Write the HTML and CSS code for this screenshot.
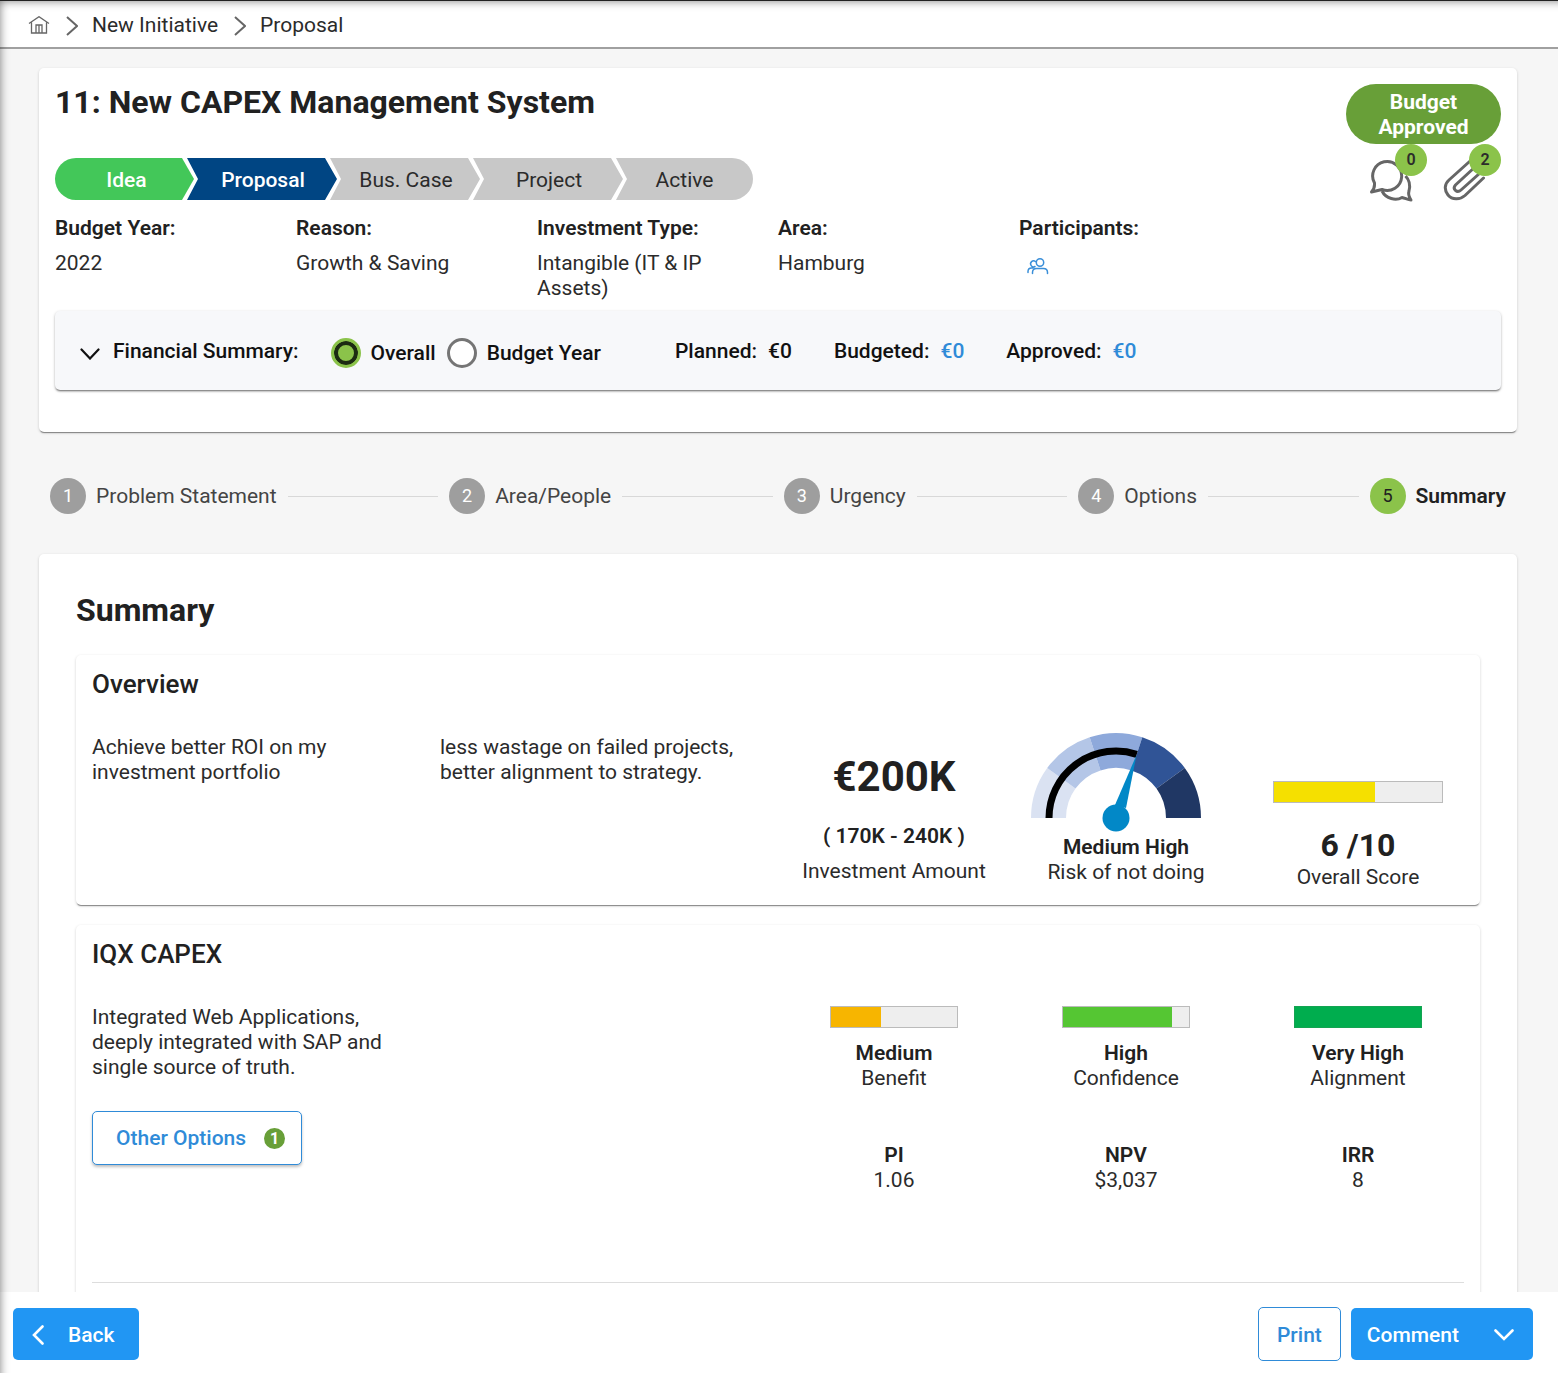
FILE: index.html
```html
<!DOCTYPE html>
<html lang="en">
<head>
<meta charset="utf-8">
<meta name="viewport" content="width=device-width, initial-scale=1">
<title>New CAPEX Management System</title>
<link rel="stylesheet" href="styles.css">
</head>
<body>
<div class="page">
  <nav class="topbar" aria-label="Breadcrumb">
    <a class="crumb" href="#" aria-label="Home">
      <svg width="22" height="20" viewBox="0 0 22 20" fill="none" stroke="#666" stroke-width="1.3"><path d="M1 7.500 11 .7 21 7.500M3.500 6.500V17h15V6.500M8 17V9h6v8M11 9.500V17"/></svg>
    </a>
    <svg class="crumb-sep" width="12" height="20" viewBox="0 0 12 20" fill="none" stroke="#666" stroke-width="2"><path d="M1 1l10 9-10 9"/></svg>
    <a class="crumb" href="#">New Initiative</a>
    <svg class="crumb-sep" width="12" height="20" viewBox="0 0 12 20" fill="none" stroke="#666" stroke-width="2"><path d="M1 1l10 9-10 9"/></svg>
    <a class="crumb" href="#">Proposal</a>
  </nav>

  <main class="content">
    <section class="card header-card">
      <div class="header-top">
        <div class="header-main">
          <h1 class="title">11: New CAPEX Management System</h1>
          <ol class="stages">
            <li class="stage stage-first stage-done">Idea</li>
            <li class="stage stage-current">Proposal</li>
            <li class="stage">Bus. Case</li>
            <li class="stage">Project</li>
            <li class="stage stage-last">Active</li>
          </ol>
        </div>
        <div class="header-side">
          <span class="status">Budget Approved</span>
          <div class="actions">
            <button class="icon-button" type="button" aria-label="Comments">
              <svg width="44" height="44" viewBox="0 0 44 44" fill="none" stroke="#666" stroke-width="3" stroke-linejoin="round"><path d="M5.500 24A14.500 14.500 0 1 1 13 30.500L2.500 33Q6 29 5.500 24Z"/><path d="M13 32c4 8 14 10 20 6.500 3 .5 6 2.500 9 2.500-2-3-3-6-2-9 1.500-6 .5-11-3.500-15"/></svg>
              <span class="badge">0</span>
            </button>
            <button class="icon-button" type="button" aria-label="Attachments">
              <svg width="44" height="44" viewBox="0 0 44 44" fill="none" stroke="#666" stroke-width="3" stroke-linecap="round"><path d="M40.500 19 22 36.500C17 41 9 41 5 36s-3.500-11 1-15L26 3c4-3.500 8-3 11 0 4 4 3 8 0 11L18 31c-4 3.500-9-1-5.500-5L32 8"/></svg>
              <span class="badge">2</span>
            </button>
          </div>
        </div>
      </div>

      <dl class="facts">
        <div><dt>Budget Year:</dt><dd>2022</dd></div>
        <div><dt>Reason:</dt><dd>Growth &amp; Saving</dd></div>
        <div><dt>Investment Type:</dt><dd>Intangible (IT &amp; IP Assets)</dd></div>
        <div><dt>Area:</dt><dd>Hamburg</dd></div>
        <div><dt>Participants:</dt><dd>
          <a class="people" href="#" aria-label="Show participants"><svg width="22" height="18" viewBox="0 0 22 18" fill="none" stroke="#3a8fd9" stroke-width="1.5" stroke-linecap="round"><circle cx="13" cy="5.500" r="3.700"/><path d="M5.500 16.500v-1q0-4 4-4h7q4 0 4 4v1M8 9.500a3 3 0 1 1 .5-5M1 15.500v-1q0-3.500 3.500-3.500H6"/></svg></a>
        </dd></div>
      </dl>

      <form class="finance">
        <button class="expander" type="button">
          <svg width="20" height="16" viewBox="0 0 20 16" fill="none" stroke="#111" stroke-width="2.200" stroke-linecap="round"><path d="M1.500 5.500 10 14.500l8.500-9"/></svg>
          Financial Summary:
        </button>
        <div class="radios">
          <label class="choice"><input class="radio" type="radio" name="scope" checked>Overall</label>
          <label class="choice"><input class="radio" type="radio" name="scope">Budget Year</label>
        </div>
        <div class="totals">
          <span class="total">Planned: <span>€0</span></span>
          <span class="total">Budgeted: <a href="#">€0</a></span>
          <span class="total">Approved: <a href="#">€0</a></span>
        </div>
      </form>
    </section>

    <ol class="stepper">
      <li class="step"><span class="step-number">1</span>Problem Statement</li>
      <li class="step-line"></li>
      <li class="step"><span class="step-number">2</span>Area/People</li>
      <li class="step-line"></li>
      <li class="step"><span class="step-number">3</span>Urgency</li>
      <li class="step-line"></li>
      <li class="step"><span class="step-number">4</span>Options</li>
      <li class="step-line"></li>
      <li class="step step-active"><span class="step-number">5</span>Summary</li>
    </ol>

    <section class="card summary-card">
      <h2 class="title">Summary</h2>

      <article class="card panel">
        <h3 class="panel-title">Overview</h3>
        <div class="panel-grid">
          <p class="text">Achieve better ROI on my investment portfolio</p>
          <p class="text">less wastage on failed projects, better alignment to strategy.</p>
          <div class="metric metric-amount">
            <strong class="amount">€200K</strong>
            <strong class="range">( 170K - 240K )</strong>
            <span>Investment Amount</span>
          </div>
          <div class="metric">
            <svg class="gauge" width="190" height="100" viewBox="-85 -84 190 100" role="img" aria-label="Gauge: medium high">
              <path fill="#dae2f2" d="M-85 0A85 85 0 0 1-68.800-50L-40.500-29.400A50 50 0 0 0-50 0Z"/>
              <path fill="#b4c6e7" d="M-68.800-50A85 85 0 0 1-26.300-80.800L-15.500-47.600A50 50 0 0 0-40.500-29.400Z"/>
              <path fill="#8ea9db" d="M-26.300-80.800A85 85 0 0 1 26.300-80.800L15.500-47.600A50 50 0 0 0-15.500-47.600Z"/>
              <path fill="#305496" d="M26.300-80.800A85 85 0 0 1 68.800-50L40.500-29.400A50 50 0 0 0 15.500-47.600Z"/>
              <path fill="#203764" d="M68.800-50A85 85 0 0 1 85 0L50 0A50 50 0 0 0 40.500-29.400Z"/>
              <path fill="none" stroke="#000" stroke-width="7" d="M-67 0A67 67 0 0 1 20.700-63.700"/>
              <path fill="#0288c7" d="M-1-13 20.500-63 10-10Z"/>
              <circle fill="#0288c7" r="13.500"/>
            </svg>
            <strong>Medium High</strong>
            <span>Risk of not doing</span>
          </div>
          <div class="metric metric-score">
            <div class="bar bar-wide bar-yellow"><div class="bar-fill" style="width:60%"></div></div>
            <strong class="score">6 /10</strong>
            <span>Overall Score</span>
          </div>
        </div>
      </article>

      <article class="card panel">
        <h3 class="panel-title">IQX CAPEX</h3>
        <div class="panel-grid option-grid">
          <div class="option">
            <p class="text">Integrated Web Applications, deeply integrated with SAP and single source of truth.</p>
            <button class="button button-outline other-options" type="button">Other Options <span class="count">1</span></button>
          </div>
          <div class="metric metric-rated">
            <div class="bar bar-amber"><div class="bar-fill" style="width:40%"></div></div>
            <strong>Medium</strong>
            <span>Benefit</span>
          </div>
          <div class="metric metric-rated">
            <div class="bar bar-lime"><div class="bar-fill" style="width:87%"></div></div>
            <strong>High</strong>
            <span>Confidence</span>
          </div>
          <div class="metric metric-rated">
            <div class="bar bar-green"><div class="bar-fill" style="width:100%"></div></div>
            <strong>Very High</strong>
            <span>Alignment</span>
          </div>
          <div class="metric metric-first"><strong>PI</strong><span>1.06</span></div>
          <div class="metric"><strong>NPV</strong><span>$3,037</span></div>
          <div class="metric"><strong>IRR</strong><span>8</span></div>
        </div>
        <hr class="divider">
      </article>
    </section>
  </main>

  <footer class="footer">
    <button class="button button-solid back" type="button">
      <svg width="12" height="20" viewBox="0 0 12 20" fill="none" stroke="#fff" stroke-width="2.600" stroke-linecap="round"><path d="M10.500 1.500 2 10l8.500 8.500"/></svg>
      Back
    </button>
    <div class="footer-right">
      <button class="button button-outline print" type="button">Print</button>
      <button class="button button-solid comment" type="button">
        Comment
        <svg width="20" height="12" viewBox="0 0 20 12" fill="none" stroke="#fff" stroke-width="2.600" stroke-linecap="round"><path d="M1.500 1.500 10 10l8.500-8.500"/></svg>
      </button>
    </div>
  </footer>
</div>
</body>
</html>
```
FILE: styles.css
```css
* { box-sizing: border-box; }

body {
  margin: 0;
  font-family: Roboto, "Liberation Sans", sans-serif;
  font-size: 21px;
  line-height: 25px;
  color: #2b2b2b;
}

h1, h2, h3, p, ol, dl, dd, form { margin: 0; padding: 0; }
ol { list-style: none; }
a { color: #2f8bd8; text-decoration: none; }
strong { font-weight: 600; color: #212121; }
button { font: inherit; color: inherit; background: none; border: 0; padding: 0; cursor: pointer; }
svg { flex: none; }

.page {
  position: relative;
  display: flex;
  flex-direction: column;
  height: 100vh;
  background: #f6f6f6;
}

.page::after {
  content: "";
  position: absolute;
  inset: 0;
  border-top: 1px solid #222;
  box-shadow: inset 8px 8px 10px -8px rgba(0, 0, 0, .5);
  pointer-events: none;
}

.topbar {
  display: flex;
  align-items: center;
  gap: 14px;
  height: 49px;
  flex: none;
  padding: 4px 0 0 28px;
  background: #fff;
  border-bottom: 2px solid #a0a0a0;
}
.crumb { display: flex; color: #2b2b2b; }
.crumb-sep { margin-left: 2px; }

.content {
  flex: 1;
  min-height: 0;
  overflow-y: auto;
  scrollbar-width: none;
  padding: 19px 41px 20px 39px;
}

.card {
  background: #fff;
  border-radius: 5px;
  box-shadow: 0 2px 1px -1px rgba(0, 0, 0, .4), 0 1px 3px rgba(0, 0, 0, .18);
}

.title { font-size: 32px; line-height: 36px; font-weight: 700; color: #212121; }

/* Header card */
.header-card { padding: 16px 16px 42px; }
.header-top { display: flex; justify-content: space-between; height: 132px; }
.header-main { display: flex; flex-direction: column; gap: 38px; }

.stages { display: flex; }
.stage {
  width: 150px;
  height: 42px;
  line-height: 44px;
  margin-left: -7px;
  padding-left: 2px;
  text-align: center;
  background: #c8c8c8;
  clip-path: polygon(0 0, calc(100% - 12px) 0, 100% 50%, calc(100% - 12px) 100%, 0 100%, 11px 50%);
}
.stage-first {
  width: 139px;
  margin-left: 0;
  padding-left: 4px;
  border-radius: 21px 0 0 21px;
  clip-path: polygon(0 0, calc(100% - 12px) 0, 100% 50%, calc(100% - 12px) 100%, 0 100%);
}
.stage-last {
  width: 137px;
  padding-left: 0;
  border-radius: 0 21px 21px 0;
  clip-path: polygon(0 0, 100% 0, 100% 100%, 0 100%, 11px 50%);
}
.stage-done, .stage-current { color: #fff; font-weight: 500; }
.stage-done { background: #43c759; }
.stage-current { background: #004583; }

.header-side { display: flex; flex-direction: column; align-items: flex-end; gap: 15px; }
.status {
  width: 155px;
  padding: 6px 24px 4px;
  border-radius: 30px;
  background: #689f38;
  color: #fff;
  font-weight: 700;
  text-align: center;
}
.actions { display: flex; gap: 30px; padding-right: 14px; }
.icon-button { position: relative; width: 44px; height: 44px; }
.icon-button svg { display: block; }
.badge {
  position: absolute;
  top: -15px;
  right: -14px;
  width: 32px;
  height: 32px;
  border-radius: 50%;
  background: #8bc34a;
  font-size: 16px;
  line-height: 32px;
  font-weight: 600;
}

.facts { display: grid; grid-template-columns: repeat(6, 1fr); }
.facts dt { font-weight: 600; padding-bottom: 10px; color: #212121; }
.facts dd { padding-right: 24px; min-height: 50px; }
.people { display: flex; padding: 6px 8px; }

.finance {
  display: flex;
  height: 79px;
  align-items: center;
  margin-top: 10px;
  padding: 2px 25px 0;
  border-radius: 5px;
  background: #f7f8fa;
  box-shadow: 0 2px 2px -1px rgba(0, 0, 0, .45), 0 1px 3px rgba(0, 0, 0, .25);
  color: #111;
  font-weight: 500;
}
.expander { display: flex; align-items: center; gap: 13px; }
.radios { display: flex; gap: 11px; margin: 3px 74px 0 32px; }
.choice { display: flex; align-items: center; gap: 10px; }
.radio {
  appearance: none;
  width: 30px;
  height: 30px;
  margin: 0;
  border: 3px solid #757575;
  border-radius: 50%;
  background: #fff;
}
.radio:checked { border-color: #8bc34a; background: #8bc34a; box-shadow: inset 0 0 0 4px #1c2b12; }
.totals { display: flex; gap: 42px; }
.total { display: flex; gap: 11px; }

/* Stepper */
.stepper { display: flex; align-items: center; gap: 11px; padding: 46px 11px 40px; }
.step { display: flex; align-items: center; gap: 10px; color: #444; }
.step-number {
  width: 36px;
  height: 36px;
  border-radius: 50%;
  background: #9e9e9e;
  color: #fff;
  font-size: 18px;
  line-height: 36px;
  text-align: center;
}
.step-line { flex: 1; height: 1px; background: #d8d8d8; }
.step-active { font-weight: 600; color: #212121; }
.step-active .step-number { background: #8bc34a; color: #212121; font-weight: 400; }

/* Summary */
.summary-card { padding: 38px 37px; }
.summary-card > .title { padding-bottom: 27px; }
.panel { padding: 15px 16px; margin-bottom: 20px; }
.panel-title { font-size: 26px; line-height: 28px; font-weight: 500; color: #212121; }
.panel-grid { display: grid; grid-template-columns: repeat(12, 1fr); column-gap: 20px; padding-top: 37px; }
.panel-grid > * { grid-column: span 3; }
.panel-grid > .metric { grid-column: span 2; }
.metric { display: flex; flex-direction: column; align-items: center; text-align: center; }
.metric-amount { padding-top: 18px; }
.amount { font-size: 42px; line-height: 48px; font-weight: 700; padding-bottom: 23px; }
.range { padding-bottom: 10px; }
.gauge { display: block; overflow: visible; margin-top: -1px; padding-bottom: 0; margin-bottom: 1px; }
.score { font-size: 32px; line-height: 40px; font-weight: 700; }

.bar {
  width: 60%;
  height: 22px;
  background: #eee;
  border: 1px solid #bbb;
}
.bar-fill { height: 100%; }
.bar-wide { width: 80%; }
.metric-score { padding-top: 46px; }
.metric-score .bar { margin-bottom: 22px; }
.bar-yellow .bar-fill { background: #f5e000; }
.bar-amber .bar-fill { background: #f7b500; }
.bar-lime .bar-fill { background: #55c633; }
.bar-green { border-color: #14a352; }
.bar-green .bar-fill { background: #00ad4e; }

.option-grid { grid-template-rows: auto 1fr; }
.panel-grid.option-grid > .option { grid-row: span 2; }
.panel-grid.option-grid > .metric-rated:nth-child(2),
.panel-grid.option-grid > .metric-first { grid-column: 7 / span 2; }
.option { display: flex; flex-direction: column; align-items: flex-start; gap: 31px; padding-bottom: 117px; }
.metric-rated { padding: 1px 0 52px; }
.metric-rated .bar { margin-bottom: 13px; }
.panel .divider { margin: 0; border: 0; border-top: 1px solid #ddd; }

/* Buttons */
.button { display: flex; align-items: center; height: 52px; border-radius: 5px; font-weight: 500; }
.button-solid { background: #2196f3; color: #fff; }
.button-outline { height: 54px; border: 1px solid #2f8bd8; background: #fff; color: #2f8bd8; }
.other-options { gap: 18px; padding: 0 16px 0 23px; box-shadow: 0 2px 3px rgba(0, 0, 0, .25); }
.count {
  width: 21px;
  height: 21px;
  border-radius: 50%;
  background: #689f38;
  color: #fff;
  font-size: 16px;
  line-height: 21px;
  font-weight: 700;
}

.footer {
  display: flex;
  align-items: center;
  justify-content: space-between;
  flex: none;
  padding: 15px 25px 12px 13px;
  background: #fff;
}
.footer-right { display: flex; align-items: center; gap: 10px; }
.back { gap: 24px; padding: 2px 24px 0 19px; }
.print { padding: 2px 18px 0; }
.comment { gap: 35px; padding: 2px 19px 0 16px; }
```
